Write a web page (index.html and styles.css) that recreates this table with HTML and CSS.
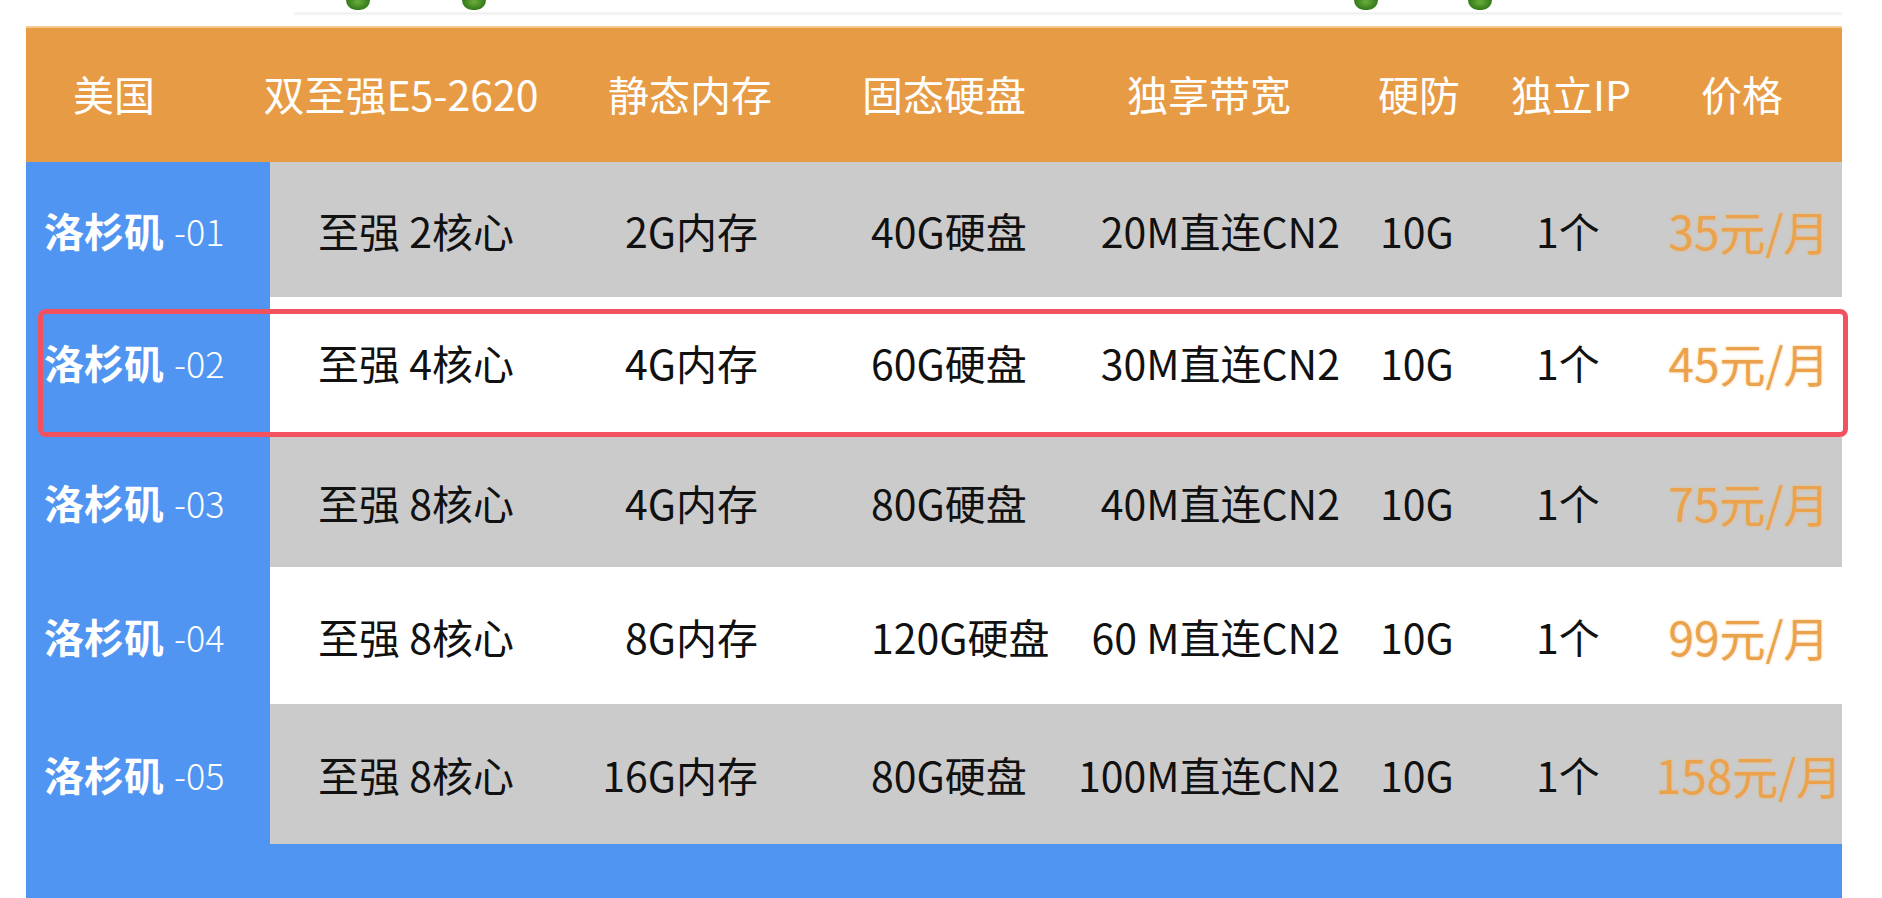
FILE: index.html
```html
<!DOCTYPE html>
<html lang="zh-CN">
<head>
<meta charset="utf-8">
<title>洛杉矶 VPS 价格表</title>
<link rel="stylesheet" href="styles.css">
</head>
<body>
<div class="page">
  <div class="deco">
    <span class="leaf leaf-a"></span>
    <span class="leaf leaf-b"></span>
    <span class="leaf leaf-c"></span>
    <span class="leaf leaf-d"></span>
  </div>
  <div class="table">
    <div class="head">
      <div class="h h1">美国</div>
      <div class="h h2">双至强E5-2620</div>
      <div class="h h3">静态内存</div>
      <div class="h h4">固态硬盘</div>
      <div class="h h5">独享带宽</div>
      <div class="h h6">硬防</div>
      <div class="h h7">独立IP</div>
      <div class="h h8">价格</div>
    </div>

    <div class="row r1 gray">
      <div class="name">洛杉矶<span class="num">-01</span></div>
      <div class="c cpu">至强 2核心</div>
      <div class="c mem">2G内存</div>
      <div class="c disk">40G硬盘</div>
      <div class="c bw">20M直连CN2</div>
      <div class="c ddos">10G</div>
      <div class="c ip">1个</div>
      <div class="c price">35元/月</div>
    </div>

    <div class="row r2 white">
      <div class="name">洛杉矶<span class="num">-02</span></div>
      <div class="c cpu">至强 4核心</div>
      <div class="c mem">4G内存</div>
      <div class="c disk">60G硬盘</div>
      <div class="c bw">30M直连CN2</div>
      <div class="c ddos">10G</div>
      <div class="c ip">1个</div>
      <div class="c price">45元/月</div>
      <div class="mark"></div>
    </div>

    <div class="row r3 gray">
      <div class="name">洛杉矶<span class="num">-03</span></div>
      <div class="c cpu">至强 8核心</div>
      <div class="c mem">4G内存</div>
      <div class="c disk">80G硬盘</div>
      <div class="c bw">40M直连CN2</div>
      <div class="c ddos">10G</div>
      <div class="c ip">1个</div>
      <div class="c price">75元/月</div>
    </div>

    <div class="row r4 white">
      <div class="name">洛杉矶<span class="num">-04</span></div>
      <div class="c cpu">至强 8核心</div>
      <div class="c mem">8G内存</div>
      <div class="c disk">120G硬盘</div>
      <div class="c bw">60 M直连CN2</div>
      <div class="c ddos">10G</div>
      <div class="c ip">1个</div>
      <div class="c price">99元/月</div>
    </div>

    <div class="row r5 gray">
      <div class="name">洛杉矶<span class="num">-05</span></div>
      <div class="c cpu">至强 8核心</div>
      <div class="c mem">16G内存</div>
      <div class="c disk">80G硬盘</div>
      <div class="c bw">100M直连CN2</div>
      <div class="c ddos">10G</div>
      <div class="c ip">1个</div>
      <div class="c price">158元/月</div>
    </div>

    <div class="foot"></div>
  </div>
</div>
</body>
</html>
```

FILE: styles.css
```css
* { box-sizing: border-box; }
html, body { margin: 0; padding: 0; background: #ffffff; }
body {
  font-family: "Noto Sans CJK SC", "Noto Sans", sans-serif;
  overflow: hidden;
}
.page { width: 1882px; height: 898px; }

/* top decoration strip */
.deco {
  height: 26px;
  display: flex;
  align-items: flex-start;
  padding-left: 346px;
  background: linear-gradient(#ffffff 0, #ffffff 12px, #ececec 13px, #f4f4f4 14px, #ffffff 16px);
  background-size: 1548px 26px;
  background-position: 294px 0;
  background-repeat: no-repeat;
}
.leaf {
  width: 24px;
  height: 10px;
  background: radial-gradient(ellipse at 50% 20%, #6cae3c 0, #3c8420 55%, #2a6414 100%);
  border-radius: 0 0 12px 12px;
}
.leaf-b { margin-left: 92px; }
.leaf-c { margin-left: 868px; }
.leaf-d { margin-left: 90px; }

.table {
  margin-left: 26px;
  width: 1816px;
}

/* header */
.head {
  height: 136px;
  background: #e89b45;
  display: flex;
  align-items: center;
  color: #ffffff;
  font-size: 41px;
  border-top: 2px solid #f6c98f;
}
.h {
  display: flex;
  justify-content: center;
  white-space: nowrap;
  padding-bottom: 4px;
}
.h1 { width: 176px; }
.h2 { width: 398px; }
.h3 { width: 180px; }
.h4 { width: 328px; }
.h5 { width: 202px; }
.h6 { width: 218px; }
.h7 { width: 86px; }
.h8 { width: 228px; padding-left: 28px; }

/* body rows */
.row {
  display: flex;
  align-items: center;
  position: relative;
  font-size: 41px;
  font-weight: 400;
  color: #111111;
  white-space: nowrap;
}
.r1 { height: 135px; }
.r2 { height: 140px; }
.r3 { height: 130px; }
.r4 { height: 137px; }
.r5 { height: 140px; }
.gray { background: #cbcbcb; }
.white { background: #ffffff; }
.r2 .c { transform: translateY(-5px); }

.name {
  width: 244px;
  align-self: stretch;
  background: #5095f2;
  color: #ffffff;
  font-weight: 700;
  font-size: 40px;
  display: flex;
  align-items: center;
  padding-left: 18px;
}
.r2 .name { padding-bottom: 10px; }
.num {
  font-weight: 300;
  font-size: 36px;
  margin-left: 10px;
}

.c { display: flex; }
.cpu { width: 290px; padding-left: 48px; }
.mem { width: 280px; justify-content: flex-end; padding-right: 82px; }
.disk { width: 210px; padding-left: 31px; }
.bw { width: 290px; justify-content: flex-end; }
.ddos { width: 160px; padding-left: 40px; }
.ip { width: 156px; padding-left: 36px; }
.price {
  width: 186px;
  justify-content: center;
  color: #eba24c;
  font-size: 46px;
  font-weight: 400;
  text-shadow: 0 0 3px rgba(245, 180, 90, 0.6);
}

/* highlighted row frame */
.mark {
  position: absolute;
  left: 12px;
  top: 12px;
  width: 1810px;
  height: 128px;
  border: 5px solid #f2525f;
  border-radius: 8px;
}

.foot {
  height: 54px;
  background: #5095f2;
}
```
